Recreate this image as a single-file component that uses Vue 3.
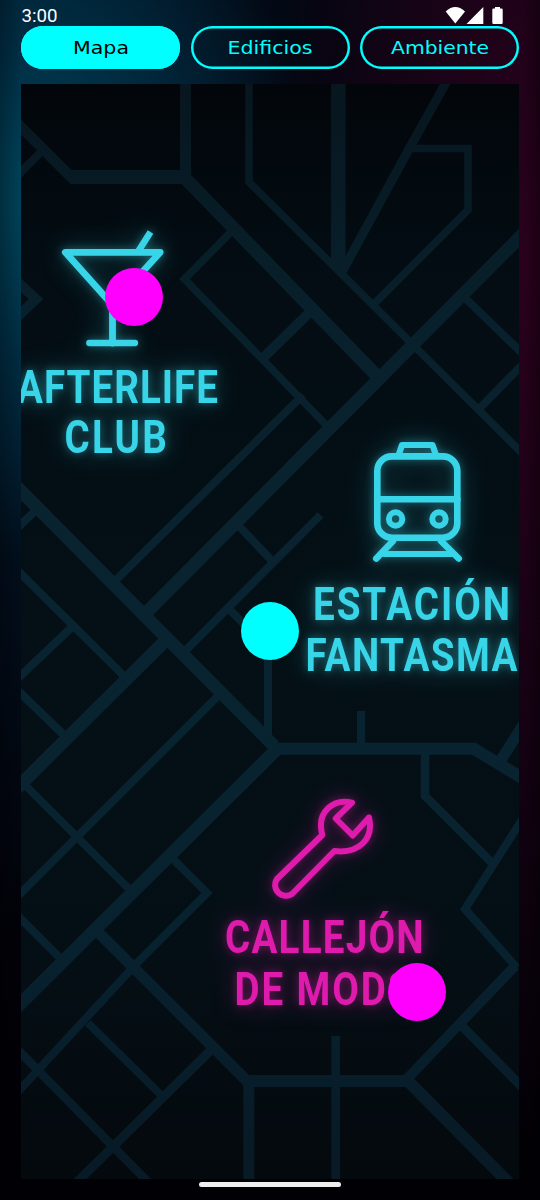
<script setup>
import { ref } from 'vue'

const tabs = [
  { name: 'Mapa', x: 52, width: 56 },
  { name: 'Edificios', x: 36.5, width: 85 },
  { name: 'Ambiente', x: 31, width: 98 }
]
const active = ref('Mapa')

const roads = [
  { w: 10.6, d: 'M10 116 L73 179' },
  { w: 14, d: 'M70 177 H186' },
  { w: 8, d: 'M42 151 L12 181' },
  { w: 11, d: 'M185.500 80 V178' },
  { w: 13, d: 'M182 175 L378 377' },
  { w: 7.5, d: 'M249 80 V182 L525 456' },
  { w: 7.5, d: 'M230 233 L184.500 279 L327 426' },
  { w: 10, d: 'M264 357 L311 311' },
  { w: 14.5, d: 'M338.300 80 V268' },
  { w: 9, d: 'M448 79 L409 149 L342 272' },
  { w: 7.5, d: 'M410 148.500 H468 V210 L374 304' },
  { w: 13, d: 'M530 227 L145 614' },
  { w: 8, d: 'M462 295 L525 356' },
  { w: 8, d: 'M525 362 L477 411' },
  { w: 10, d: 'M12 277 L36 299 L12 322' },
  { w: 13, d: 'M10 480 L274 746' },
  { w: 8, d: 'M36 510 L12 533' },
  { w: 8, d: 'M12 565 L126 678' },
  { w: 8, d: 'M74 625 L12 684' },
  { w: 8, d: 'M12 685 L66 737' },
  { w: 13, d: 'M168 638 L12 793' },
  { w: 8, d: 'M24 784 L131 891' },
  { w: 8, d: 'M220 694 L12 902' },
  { w: 13, d: 'M278 748 L12 1012' },
  { w: 8, d: 'M171 857 L207 893 L138 962 L12 1098' },
  { w: 8, d: 'M12 910 L61 959' },
  { w: 11, d: 'M98 932 L247 1081' },
  { w: 12, d: 'M243 1081 H407' },
  { w: 11, d: 'M248.800 1080 V1190' },
  { w: 8, d: 'M88 1023 L162 1096' },
  { w: 9, d: 'M211 1050 L70 1189' },
  { w: 8.5, d: 'M12 1044 L155 1189' },
  { w: 8.7, d: 'M335.700 1036 V1190' },
  { w: 10, d: 'M404 1082 L515 966' },
  { w: 8, d: 'M517 968 L465 909 L525 815' },
  { w: 9, d: 'M460 1024 L527 1092' },
  { w: 12, d: 'M403 1076 L515 1189' },
  { w: 8, d: 'M268 620 V745' },
  { w: 12, d: 'M271 748.800 H474 L527 781' },
  { w: 8, d: 'M361 711 V746' },
  { w: 11, d: 'M501 760 L525 722' },
  { w: 8.5, d: 'M425 750 V796 L493 864' },
  { w: 8, d: 'M114 582 L303 395' },
  { w: 8, d: 'M237 524 L273 562' },
  { w: 8, d: 'M320.500 515 L183 653' },
  { w: 8, d: 'M228 608 L250 630' }
]

const condense = 0.84
const labels = {
  cyan: [
    { text: 'AFTERLIFE', x: 17, y: 402.7, width: 201 },
    { text: 'CLUB', x: 64.5, y: 453, width: 102.5 },
    { text: 'ESTACIÓN', x: 313, y: 620, width: 197 },
    { text: 'FANTASMA', x: 305.5, y: 671, width: 212 }
  ],
  pink: [
    { text: 'CALLEJÓN', x: 225, y: 953, width: 198.5 },
    { text: 'DE MODS', x: 234.5, y: 1004.5, width: 177 }
  ]
}

const markers = [
  { id: 'club', left: 84, top: 184, color: '#ff00ff' },
  { id: 'station', left: 220, top: 518.5, color: '#00ffff' },
  { id: 'alley', left: 366.5, top: 879.5, color: '#ff00ff' }
]
</script>

<template>
  <div class="screen">
    <header class="status">
      <span class="time">3:00</span>
      <svg class="indicators" width="60" height="20" viewBox="444 5 60 20" fill="#fff">
        <path d="M445.700 11.400 Q455.300 2.800 465 11.400 L455.300 23.500 Z" />
        <path d="M466.500 24 L483.300 7 V24 Z" />
        <path d="M495 8.500 V7 H500 V8.500 H501.500 Q502.700 8.500 502.700 9.700 V22.700 Q502.700 24 501.500 24 H493.500 Q492.300 24 492.300 22.700 V9.700 Q492.300 8.500 493.500 8.500 Z" />
      </svg>
    </header>

    <nav class="tabs">
      <button
        v-for="tab in tabs"
        :key="tab.name"
        class="tab"
        :class="{ active: active === tab.name }"
        @click="active = tab.name"
      >
        <svg width="159" height="42.700" viewBox="0 0 159 42.700">
          <text :x="tab.x" y="27.800" :textLength="tab.width" lengthAdjust="spacingAndGlyphs">{{ tab.name }}</text>
        </svg>
      </button>
    </nav>

    <main class="map">
      <svg class="city" width="498" height="1095" viewBox="21 84 498 1095">
        <defs>
          <linearGradient id="ground" gradientUnits="userSpaceOnUse" x1="0" y1="84" x2="0" y2="1179">
            <stop offset="0" stop-color="#02060b" />
            <stop offset="0.18" stop-color="#030d13" />
            <stop offset="0.5" stop-color="#041016" />
            <stop offset="0.8" stop-color="#040f15" />
            <stop offset="1" stop-color="#04090d" />
          </linearGradient>
          <linearGradient id="asphalt" gradientUnits="userSpaceOnUse" x1="0" y1="84" x2="0" y2="1179">
            <stop offset="0" stop-color="#07161f" />
            <stop offset="0.2" stop-color="#08202b" />
            <stop offset="0.5" stop-color="#092431" />
            <stop offset="0.8" stop-color="#08212f" />
            <stop offset="1" stop-color="#071a25" />
          </linearGradient>
          <filter id="glow" filterUnits="userSpaceOnUse" x="0" y="180" width="540" height="880" color-interpolation-filters="sRGB">
            <feGaussianBlur in="SourceGraphic" stdDeviation="14" result="far" />
            <feComponentTransfer in="far" result="farSoft"><feFuncA type="linear" slope="0.35" /></feComponentTransfer>
            <feGaussianBlur in="SourceGraphic" stdDeviation="4" result="near" />
            <feComponentTransfer in="near" result="nearSoft"><feFuncA type="linear" slope="0.42" /></feComponentTransfer>
            <feMerge>
              <feMergeNode in="farSoft" />
              <feMergeNode in="nearSoft" />
              <feMergeNode in="SourceGraphic" />
            </feMerge>
          </filter>
        </defs>

        <rect x="21" y="84" width="498" height="1095" fill="url(#ground)" />
        <g fill="none" stroke="url(#asphalt)">
          <path v-for="(road, i) in roads" :key="i" :d="road.d" :stroke-width="road.w" />
        </g>

        <g class="cyan" filter="url(#glow)">
          <g class="icon">
            <path d="M112.500 305 L65.300 252.300 H160.200 L112.500 305 V343" stroke-width="6.800" />
            <path d="M89.300 343 H135" stroke-width="6.300" />
            <path d="M150.500 232 L138.500 251" stroke-width="6.600" stroke-linecap="butt" />
            <rect x="377.300" y="456.400" width="80" height="81.300" rx="14.500" stroke-width="6.600" />
            <path d="M399 454 L402 445 H432.500 L435.600 454" stroke-width="6.200" />
            <path d="M377.300 499.300 H457.300" stroke-width="6.600" />
            <circle cx="395.600" cy="519" r="6.700" stroke-width="6" />
            <circle cx="439" cy="519" r="6.700" stroke-width="6" />
            <path d="M393 541 L376.300 558.500 M441 541 L458.700 558.500" stroke-width="6.600" />
            <path d="M384 554 H451" stroke-width="6" />
          </g>
          <text
            v-for="label in labels.cyan"
            :key="label.text"
            :transform="`translate(${label.x} ${label.y}) scale(${condense} 1)`"
            :textLength="label.width / condense"
            lengthAdjust="spacing"
          >{{ label.text }}</text>
        </g>

        <g class="pink" filter="url(#glow)">
          <path
            class="icon"
            stroke-width="6"
            d="M352 802.700 C334 798.500 316 811 322.300 835 L277 879 A10.800 10.800 0 0 0 292 894 L334.300 851 C359 854 374 839 369 817.500 L352.700 835.500 L335.700 818.500 Z"
          />
          <text
            v-for="label in labels.pink"
            :key="label.text"
            :transform="`translate(${label.x} ${label.y}) scale(${condense} 1)`"
            :textLength="label.width / condense"
            lengthAdjust="spacing"
          >{{ label.text }}</text>
        </g>
      </svg>

      <button
        v-for="marker in markers"
        :key="marker.id"
        class="marker"
        :style="{ left: marker.left + 'px', top: marker.top + 'px', background: marker.color }"
      ></button>
    </main>

    <div class="home"></div>
  </div>
</template>

<style>
html,
body {
  background: #000;
  overflow: hidden;
}
</style>

<style scoped>
.screen {
  box-sizing: border-box;
  width: 540px;
  height: 1200px;
  padding: 0 21px;
  display: flex;
  flex-direction: column;
  font-family: Roboto, "Liberation Sans", sans-serif;
  background:
    linear-gradient(90deg, rgba(0, 0, 0, 0.25), transparent 4%, transparent 97%, rgba(0, 0, 0, 0.35)),
    radial-gradient(ellipse 270px 360px at 40px 200px, rgba(0, 78, 102, 0.85), rgba(0, 56, 80, 0.66) 45%, transparent),
    radial-gradient(ellipse 330px 800px at 0 150px, rgba(0, 32, 54, 0.8), transparent),
    radial-gradient(ellipse 270px 900px at 540px 260px, rgba(46, 0, 30, 0.95), transparent),
    linear-gradient(#020610, #01020a 60%, #010005);
}

.status {
  height: 26px;
  flex: none;
  display: flex;
  justify-content: space-between;
  align-items: flex-start;
}

.time {
  color: #fff;
  font-size: 18.7px;
  line-height: 22px;
  padding: 5px 0 0 0.5px;
}

.indicators {
  margin: 5px 15px 0 0;
}

.tabs {
  flex: none;
  height: 42.7px;
  display: grid;
  grid-template-columns: repeat(3, 159px);
  justify-content: space-between;
}

.tab {
  position: relative;
  padding: 0;
  border: 0;
  border-radius: 22px;
  box-shadow: inset 0 0 0 2.4px #00ffff;
  background: transparent;
  overflow: hidden;
}

.tab svg {
  display: block;
}

.tab text {
  font-family: "DejaVu Sans", sans-serif;
  font-size: 18.5px;
  fill: #00ffff;
}

.tab.active {
  background: #00ffff;
}

.tab.active text {
  fill: #000;
}

.map {
  position: relative;
  flex: none;
  width: 498px;
  height: 1095px;
  margin-top: 15.3px;
  overflow: hidden;
}

.city {
  display: block;
}

.city text {
  font-family: Roboto, sans-serif;
  font-size: 46px;
  font-weight: 700;
}

.icon {
  fill: none;
  stroke-linecap: round;
  stroke-linejoin: round;
}

.cyan {
  fill: #38d5e9;
  stroke: none;
}

.cyan .icon {
  stroke: #38d5e9;
}

.pink {
  fill: #df1bad;
}

.pink .icon {
  stroke: #df1bad;
}

.marker {
  position: absolute;
  width: 58px;
  height: 58px;
  padding: 0;
  border: 0;
  border-radius: 50%;
}

.home {
  flex: none;
  align-self: center;
  width: 142px;
  height: 5px;
  margin-top: 3px;
  border-radius: 2.5px;
  background: #eee;
}
</style>
